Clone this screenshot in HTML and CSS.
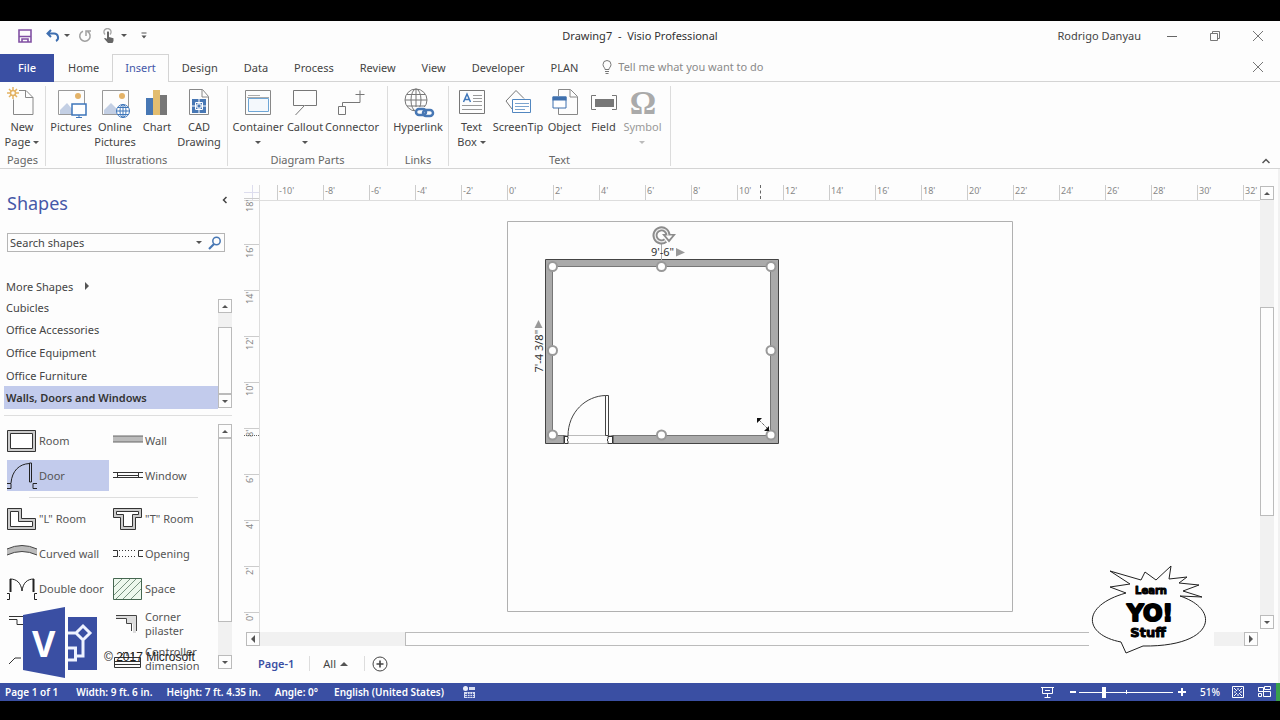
FILE: index.html
```html
<!DOCTYPE html>
<html lang="en">
<head>
<meta charset="utf-8">
<title>Drawing7 - Visio Professional</title>
<link rel="stylesheet" href="styles.css">
</head>
<body>
<div class="app">
  <header class="titlebar">
    <div class="quick">
      <button class="q-save" aria-label="Save"><svg width="14" height="14" viewBox="0 0 14 14" fill="none" stroke="#8150a3" stroke-width="1.6"><path d="M1 1h12v12H1zM1 7.5h12M4 13v-3h6v3"/></svg></button>
      <button class="q-undo" aria-label="Undo"><svg width="14" height="14" viewBox="0 0 14 14" fill="none" stroke="#3f6fb0" stroke-width="2"><path d="M5 1L1.5 4.5 5 8M2 4.5h6a4 4 0 0 1 2 7.500"/></svg><i class="down"></i></button>
      <button class="q-redo" aria-label="Repeat"><svg width="14" height="14" viewBox="0 0 14 14" fill="none" stroke="#a0a0a0" stroke-width="1.500"><path d="M5 2.200a5.200 5.200 0 1 0 4.500.3M8 7V2h5"/></svg></button>
      <button class="q-touch" aria-label="Touch mode"><svg width="12" height="16" viewBox="0 0 12 16"><path d="M2 6.500a3.500 3.500 0 1 1 5 0" fill="none" stroke="#a8a8a8" stroke-width="1.500"/><path d="M4 4q1-1.400 2 0v5l4.500 1.200V13L9.500 15H5L1 10.500q1-1.200 3 .5z" fill="#666"/></svg><i class="down"></i></button>
      <button class="q-more" aria-label="Customize"><svg width="6" height="7" viewBox="0 0 6 7"><path d="M.5.500h5v1h-5zM.5 3.500h5L3 6.500z" fill="#555"/></svg></button>
    </div>
    <h1>Drawing7&nbsp; -&nbsp; Visio Professional</h1>
    <div class="account">
      <span>Rodrigo Danyau</span>
      <button aria-label="Minimize"><svg width="10" height="10"><path d="M0 5.500h10" stroke="#666"/></svg></button>
      <button aria-label="Restore"><svg width="10" height="10" fill="none" stroke="#777"><path d="M.5 2.500h7v7h-7zM2.500 2.500v-2h7v7h-2"/></svg></button>
      <button aria-label="Close"><svg width="10" height="10"><path d="M0 0l10 10M10 0L0 10" stroke="#777"/></svg></button>
    </div>
  </header>

  <nav class="tabs">
    <button class="file">File</button>
    <button>Home</button>
    <button class="active">Insert</button>
    <button>Design</button>
    <button>Data</button>
    <button>Process</button>
    <button>Review</button>
    <button>View</button>
    <button>Developer</button>
    <button>PLAN</button>
    <label class="tell"><svg width="10" height="14" viewBox="0 0 10 14" fill="none" stroke="#777"><path d="M3 9.500C3 7.500 1 7 1 4.500a4 4 0 0 1 8 0C9 7 7 7.500 7 9.500zM3 11.500h4M3.500 13.500h3"/></svg><input type="text" placeholder="Tell me what you want to do"></label>
    <button class="doc-close" aria-label="Close document"><svg width="10" height="10"><path d="M0 0l10 10M10 0L0 10" stroke="#777"/></svg></button>
  </nav>

  <section class="ribbon">
    <div class="group g-pages">
      <div class="items">
        <button><svg width="32" height="32" viewBox="0 0 32 32" fill="none"><path d="M13 4.500h7l7 7v17H7.500v-15M19.500 4.500v7H27" stroke="#888"/><g stroke="#e3b263" stroke-width="1.500"><circle cx="7" cy="7" r="2.500"/><path d="M7 1v3M7 10v3M1 7h3M10 7h3M3 3l2 2M9 9l2 2M11 3L9 5M5 9l-2 2"/></g></svg><span>New<br>Page<i class="down beside"></i></span></button>
      </div>
      <h2>Pages</h2>
    </div>
    <div class="group g-illustrations">
      <div class="items">
        <button><svg width="32" height="32" viewBox="0 0 32 32" fill="none"><path d="M3.500 4.500h26v24h-26z" stroke="#999"/><path d="M5 28v-4l7-7 5 6v5z" fill="#c3cfe4"/><circle cx="23" cy="10" r="3" fill="#e4b368"/><path d="M17 18h14v11H17z" fill="#fff" stroke="#3e76ba" stroke-width="1.500"/><path d="M24 29v3M21 31.500h6" stroke="#3e76ba"/></svg><span>Pictures</span></button>
        <button><svg width="32" height="32" viewBox="0 0 32 32" fill="none"><path d="M3.500 4.500h26v24h-26z" stroke="#999"/><path d="M5 28v-4l7-7 6 6v5z" fill="#c3cfe4"/><circle cx="23" cy="10" r="3" fill="#e4b368"/><circle cx="24" cy="25" r="6.500" fill="#fff" stroke="#3e76ba"/><ellipse cx="24" cy="25" rx="3" ry="6.500" stroke="#3e76ba"/><path d="M17.500 25h13M24 18.500v13M19 21.500h10M19 28.500h10" stroke="#3e76ba"/></svg><span>Online<br>Pictures</span></button>
        <button><svg width="32" height="32" viewBox="0 0 32 32"><path d="M5 12h7v17H5z" fill="#4777b4"/><path d="M12 4h7v25h-7z" fill="#e2bd70"/><path d="M19 9h7v20h-7z" fill="#777"/></svg><span>Chart</span></button>
        <button><svg width="32" height="32" viewBox="0 0 32 32" fill="none"><path d="M6.500 3.500h13l6 7v18h-19zM19 4v7h6" stroke="#888"/><path d="M9 13h14v14H9z" fill="#4777b4"/><path d="M16 13v14M9 20h14" stroke="#fff"/><path d="M12.500 16.500h7v7h-7z" stroke="#fff"/><path d="M14 18h4v4h-4z" fill="#4777b4" stroke="#fff"/></svg><span>CAD<br>Drawing</span></button>
      </div>
      <h2>Illustrations</h2>
    </div>
    <div class="group g-diagram">
      <div class="items">
        <button><svg width="32" height="32" viewBox="0 0 32 32" fill="none"><path d="M3.500 4.500h25v24h-25z" stroke="#888"/><path d="M6 9.500h12M5 11.500h22" stroke="#aaa"/><path d="M6.500 12.500h20v13h-20z" stroke="#6ea6d6" fill="#f4f8fc"/></svg><span>Container<br><i class="down"></i></span></button>
        <button><svg width="32" height="32" viewBox="0 0 32 32" fill="none" stroke="#777"><path d="M16 19.500h11.500v-15h-23v15h11L6.500 29"/></svg><span>Callout<br><i class="down"></i></span></button>
        <button><svg width="32" height="32" viewBox="0 0 32 32" fill="none" stroke="#777"><path d="M2.500 20.500h7v8h-7zM6.500 20v-3.500h17.500v-12M19.500 8.500h9"/></svg><span>Connector</span></button>
      </div>
      <h2>Diagram Parts</h2>
    </div>
    <div class="group g-links">
      <div class="items">
        <button><svg width="32" height="32" viewBox="0 0 32 32" fill="none"><g stroke="#777"><circle cx="14" cy="14" r="11"/><ellipse cx="14" cy="14" rx="5" ry="11"/><path d="M3 14h22M14 3v22M5 8.500h18M5 20h18"/></g><path d="M13 21h20v10H13z" fill="#fdfdfd"/><g stroke="#4777b4" stroke-width="2.500"><rect x="14" y="23" width="10" height="6" rx="3"/><rect x="21" y="24" width="10" height="6" rx="3"/></g></svg><span>Hyperlink</span></button>
      </div>
      <h2>Links</h2>
    </div>
    <div class="group g-text">
      <div class="items">
        <button><svg width="32" height="32" viewBox="0 0 32 32" fill="none"><path d="M3.500 4.500h25v23h-25z" stroke="#777"/><path d="M7.500 16L11 8l3.500 8M9 13.500h4" stroke="#3e76ba" stroke-width="1.500"/><path d="M17 9.500h9M17 12.500h9M17 15.500h9M6 19.500h20M6 23.500h20" stroke="#999"/></svg><span>Text<br>Box<i class="down beside"></i></span></button>
        <button><svg width="32" height="32" viewBox="0 0 32 32" fill="none"><path d="M10 23l-6-8L14 4.500l8 8" stroke="#777"/><path d="M10.500 13.500h18v13h-18z" fill="#fff" stroke="#5287c0"/><path d="M13 17.500h14M13 20.500h14M13 23.500h10" stroke="#7ba4cf"/></svg><span>ScreenTip</span></button>
        <button><svg width="32" height="32" viewBox="0 0 32 32" fill="none"><path d="M9.500 10V3.500h12l7 7v18h-19V22M21 4v7h7" stroke="#888"/><path d="M4 11h13v11H4z" fill="#fff" stroke="#3e70ae"/><path d="M3.500 10.500h14v4h-14z" fill="#3e70ae"/></svg><span>Object</span></button>
        <button><svg width="32" height="32" viewBox="0 0 32 32" fill="none"><path d="M8 9.500H3.500v14H8M24 9.500h4.500v14H24" stroke="#777"/><path d="M7 13h19v8H7z" fill="#777"/></svg><span>Field</span></button>
        <button class="disabled" disabled><svg width="32" height="32" viewBox="0 0 32 32"><text class="omega" x="16" y="28">Ω</text></svg><span>Symbol<br><i class="down"></i></span></button>
      </div>
      <h2>Text</h2>
    </div>
    <button class="collapse" aria-label="Collapse the ribbon"><svg width="8" height="6" fill="none" stroke="#555" stroke-width="1.500"><path d="M.5 5L4 1.500 7.500 5"/></svg></button>
  </section>

  <main class="work">
    <aside class="shapes">
      <div class="shapes-head"><h2>Shapes</h2><button aria-label="Minimize the Shapes window"><svg width="5" height="8" fill="none" stroke="#444" stroke-width="1.500"><path d="M4.500 1L1.500 4l3 3"/></svg></button></div>
      <div class="search">
        <input type="text" aria-label="Search shapes" value="Search shapes">
        <i class="down"></i>
        <button aria-label="Search"><svg width="14" height="14" viewBox="0 0 14 14" fill="none" stroke="#4777b4" stroke-width="1.500"><circle cx="8.500" cy="5" r="3.700"/><path d="M6 8l-5 5" stroke-width="2.200"/></svg></button>
      </div>
      <button class="more">More Shapes<i class="right"></i></button>
      <div class="stencils">
        <ul>
          <li><button>Cubicles</button></li>
          <li><button>Office Accessories</button></li>
          <li><button>Office Equipment</button></li>
          <li><button>Office Furniture</button></li>
          <li><button class="current">Walls, Doors and Windows</button></li>
        </ul>
        <div class="vbar"><button aria-label="Up"><i class="up"></i></button><div class="gap"></div><div class="thumb"></div><button aria-label="Down"><i class="down"></i></button></div>
      </div>
      <div class="masters">
        <div class="palette">
          <div class="grid">
            <button><svg width="30" height="30" viewBox="0 0 30 30" fill="none" stroke="#333"><path d="M.5 4.500h28v21H.5z" fill="#ccc"/><path d="M3.500 7.500h22v15h-22z" fill="#fff"/></svg>Room</button>
            <button><svg width="30" height="30" viewBox="0 0 30 30"><path d="M0 10h30v6H0z" fill="#bbb"/><path d="M0 10h30M0 16h30" stroke="#666"/></svg>Wall</button>
            <button class="picked"><svg width="30" height="30" viewBox="0 0 30 30" fill="none" stroke="#222"><path d="M4 22C5 10 12 3 22.500 2.500M22.500 2h2v19h-2zM0 22.500h4v5H0M30 22.500h-4v5h4"/></svg>Door</button>
            <button><svg width="30" height="30" viewBox="0 0 30 30" fill="none" stroke="#333"><path d="M0 11.500h30M0 16.500h30M4.500 11v6M25.500 11v6M5 14.500h20"/></svg>Window</button>
          </div>
          <hr>
          <div class="grid">
            <button><svg width="30" height="30" viewBox="0 0 30 30" fill="none" stroke="#333"><path d="M.5 4.500h14v10h14v11H.5z" fill="#ccc"/><path d="M3.500 7.500h8v10h14v5h-22z" fill="#fff"/></svg>"L" Room</button>
            <button><svg width="30" height="30" viewBox="0 0 30 30" fill="none" stroke="#333"><path d="M.5 4.500h28v9h-6v12h-15v-12h-7z" fill="#ccc"/><path d="M3.500 7.500h22v3h-6v12h-9v-12h-7z" fill="#fff"/></svg>"T" Room</button>
            <button><svg width="30" height="30" viewBox="0 0 30 30"><path d="M0 10q15-7 30 0v6q-15-7-30 0z" fill="#bbb"/><path d="M0 10q15-7 30 0M0 16q15-7 30 0" fill="none" stroke="#444"/></svg>Curved wall</button>
            <button><svg width="30" height="30" viewBox="0 0 30 30" fill="none" stroke="#333"><path d="M0 11.500h4.500v6H0M30 11.500h-4.500v6H30"/><path d="M6 11.500h18M6 17.500h18" stroke-dasharray="1 2"/></svg>Opening</button>
            <button><svg width="30" height="30" viewBox="0 0 30 30" fill="none" stroke="#222"><path d="M3.500 18V5M26.500 18V5" stroke-width="2"/><path d="M3 5c7 0 11 4 12 12C16 9 20 5 27 5M0 19.500h2.500v6H0M30 19.500h-2.500v6H30"/></svg>Double door</button>
            <button><svg width="30" height="30" viewBox="0 0 30 30" fill="#edf8ed" stroke="#456650"><path d="M.5 4.500h28v21H.5z"/><path d="M1 13l8-8M1 21L17 5M3 25L23 5M10 25L28 7M18 25l10-10" stroke-width=".7"/></svg>Space</button>
            <button aria-label="Pilaster"><svg width="30" height="30" viewBox="0 0 30 30" fill="none" stroke="#333"><path d="M2 7.500h26M2 10.500h8v5h18"/></svg></button>
            <button><svg width="30" height="30" viewBox="0 0 30 30" fill="none"><path d="M3 6h20v18h-3v-9h-6v-6H3z" fill="#ddd"/><path d="M3 6.500h20.500V22M3 9.500h10.500v5h5V22" stroke="#444"/></svg>Corner<br>pilaster</button>
            <button aria-label="Callout"><svg width="30" height="30" viewBox="0 0 30 30" fill="none" stroke="#333"><path d="M2 20l6-6h6"/></svg></button>
            <button><svg width="30" height="30" viewBox="0 0 30 30" fill="none" stroke="#333"><path d="M1.500 13.500h26v10h-26zM2 17.500h25M2 20.500h25M8 12l3-4M14 12V8M20 12V8"/></svg>Controller<br>dimension</button>
          </div>
        </div>
        <div class="vbar tall"><button aria-label="Up"><i class="up"></i></button><div class="thumb"></div><div class="gap"></div><button aria-label="Down"><i class="down"></i></button></div>
      </div>
    </aside>

    <section class="drawing">
      <div class="corner"></div>
      <div class="hruler"><span>-10'</span><span>-8'</span><span>-6'</span><span>-4'</span><span>-2'</span><span>0'</span><span>2'</span><span>4'</span><span>6'</span><span>8'</span><span>10'</span><span>12'</span><span>14'</span><span>16'</span><span>18'</span><span>20'</span><span>22'</span><span>24'</span><span>26'</span><span>28'</span><span>30'</span><span>32'</span><i class="hmark"></i></div>
      <div class="vbar page-bar"><button aria-label="Up"><i class="up"></i></button><div class="gap"></div><div class="thumb"></div><div class="gap"></div><button aria-label="Down"><i class="down"></i></button></div>
      <div class="vruler"><span>18'</span><span>16'</span><span>14'</span><span>12'</span><span>10'</span><span>8'</span><span>6'</span><span>4'</span><span>2'</span><span>0'</span><i class="vmark"></i></div>
      <div class="canvas">
        <svg width="1000" height="430" viewBox="260 201 1000 430" fill="none">
          <path d="M507.500 221.500h505v390h-505z" fill="#fdfdfd" stroke="#b0b0b0"/>
          <path d="M545.500 259.500h233v184h-233z" fill="#aaa"/>
          <path d="M553 267h218v169H553z" fill="#fdfdfd"/>
          <path d="M564 436h48v9h-48z" fill="#fdfdfd"/>
          <path d="M564.500 443.500h-19v-184h233v184h-166" stroke="#444"/>
          <path d="M564.500 435.500H552.500v-169h218v169H612.500" stroke="#777"/>
          <path d="M564 435.500h48M568 443.500h42" stroke="#bbb"/>
          <path d="M564.500 435.500v8M612.500 435.500v8" stroke="#333" stroke-width="2"/>
          <path d="M565 436.500h3v2q-1.500 1.500 0 3v2h-3M612 436.500h-4v2q-1.500 1.500 0 3v2h4" fill="#fff" stroke="#333"/>
          <path d="M568 436C568 412 586 396 605.500 395.500M605.500 395.500h3v40h-3z" stroke="#444"/>
          <path d="M661.500 243v19" stroke="#aaa"/>
          <g class="handles"><circle cx="552.500" cy="266.500" r="4.500"/><circle cx="661.500" cy="266.500" r="4.500"/><circle cx="771" cy="266.500" r="4.500"/><circle cx="552.500" cy="350.500" r="4.500"/><circle cx="771" cy="350.500" r="4.500"/><circle cx="552.500" cy="435" r="4.500"/><circle cx="661.500" cy="435" r="4.500"/><circle cx="771" cy="435" r="4.500"/></g>
          <path d="M665.500 240.500a6.500 6.500 0 1 1 2.500-5" stroke="#8c8c8c" stroke-width="5"/>
          <path d="M662 234h14l-7 8.500z" fill="#8c8c8c"/>
          <path d="M665.500 240.500a6.500 6.500 0 1 1 2.500-5" stroke="#eee" stroke-width="1.300"/>
          <path d="M665.500 235.500h7l-3.500 4z" fill="#fff"/>
          <text class="dim" x="651" y="256">9'-6"</text>
          <path d="M676 248l9 4.500-9 4z" fill="#999"/>
          <text class="dim" transform="translate(542.500 372.500) rotate(-90)">7'-4 3/8"</text>
          <path d="M534.500 328l4-8 4 8z" fill="#999"/>
          <path d="M759 420l8 8" stroke="#222" stroke-dasharray="1 1"/>
          <path d="M757 418h5l-5 5zM769 431h-5l5-5z" fill="#111"/>
        </svg>
      </div>
      <div class="hbar"><button aria-label="Left"><i class="left"></i></button><div class="gap"></div><div class="thumb"></div><div class="gap end"></div><button aria-label="Right"><i class="right"></i></button></div>
      <div class="pages"><button class="current">Page-1</button><button class="all">All<i class="up"></i></button><button class="add" aria-label="Insert page"><svg width="16" height="16" fill="none" stroke="#444"><circle cx="8" cy="8" r="7"/><path d="M8 4.500v7M4.500 8h7" stroke-width="1.600"/></svg></button></div>
    </section>

    <div class="edge"></div>

    <div class="visio-mark">
      <svg width="78" height="74" viewBox="0 0 78 74" fill="none"><path d="M1 10L43 2v71L1 65z" fill="#3a4fa3"/><path d="M46 12h29v53H46z" fill="#3a4fa3"/><path d="M46 28h8M61 35v16h-7M46 43h7.500v12H46M54 28l7-7 7 7-7 7z" stroke="#eef2ff" stroke-width="3"/><text class="vee" x="10" y="52">V</text></svg>
      <span>© 2017 Microsoft</span>
    </div>
    <div class="yo-mark">
      <svg width="125" height="92" viewBox="9 4 125 92"><path d="M46 33L30 27l20-3L30 11l31 9 4-8 11 8L91 6l-2 13 18-2-8 6 20 2-16 6 19 6-22-1C142 50 134 87 63 86L46 93l-5-11C4 75 0 46 46 33z" fill="#fdfdfd" stroke="#222"/><text class="learn" x="71" y="34">Learn</text><text class="yo" x="70" y="61">YO!</text><text class="stuff" x="68" y="77">Stuff</text></svg>
    </div>
  </main>

  <footer class="status">
    <span class="s-page">Page 1 of 1</span><span class="s-width">Width: 9 ft. 6 in.</span><span class="s-height">Height: 7 ft. 4.35 in.</span><span class="s-angle">Angle: 0°</span><span class="s-lang">English (United States)</span>
    <button aria-label="Macro"><svg width="12" height="12" viewBox="0 0 12 12"><circle cx="2.500" cy="2.500" r="2.500" fill="#e9edf9"/><path d="M6 1h6v3H6zM1 6h11v6H1z" fill="#d8def2"/><path d="M2 8.500h9M2 10.500h9M4.500 6.500v5M7 6.500v5M9.500 6.500v5" stroke="#3a4fa3" stroke-width=".8"/></svg></button>
    <div class="zoom">
      <button aria-label="Presentation mode"><svg width="13" height="12" fill="none" stroke="#fff"><path d="M0 1.500h13M1.500 2v5.500h10V2M6.500 8v3M3.500 11.500h6M4 4.500h5"/></svg></button>
      <button aria-label="Zoom out" class="sign"><svg width="6" height="8"><path d="M0 4h6" stroke="#fff" stroke-width="2"/></svg></button>
      <input type="range" aria-label="Zoom" min="0" max="100" value="25">
      <button aria-label="Zoom in" class="sign"><svg width="8" height="8"><path d="M0 4h8M4 0v8" stroke="#fff" stroke-width="2"/></svg></button>
      <span>51%</span>
      <button aria-label="Fit page"><svg width="12" height="12" fill="none" stroke="#fff"><path d="M.5.500h11v11H.5zM2 2l3 3M10 2L7 5M2 10l3-3M10 10L7 7M6 2v2M6 8v2M2 6h2M8 6h2"/></svg></button>
      <button aria-label="Switch windows" class="switch"><svg width="14" height="12" fill="none" stroke="#fff"><path d="M.5 1.500h5v4h-5zM6.500.500h6v3h-6zM5.500 5.500h7v5h-7zM.5 7.500h3v3h-3z"/></svg></button>
      <i class="green"></i>
    </div>
  </footer>
</div>
</body>
</html>
```
FILE: styles.css
```css
* { box-sizing: border-box; }
body { margin: 0; background: #000; color: #444; font: 11px/15px "Noto Sans", "Open Sans", sans-serif; }
button, input { margin: 0; padding: 0; border: 0; border-radius: 0; background: none; color: inherit; font: inherit; line-height: inherit; outline: 0; }
button { display: inline-flex; align-items: center; justify-content: center; white-space: nowrap; }
h1, h2, ul { margin: 0; padding: 0; font-size: 11px; font-weight: 400; list-style: none; }
svg { display: block; flex: none; }
.app { display: flex; flex-direction: column; height: 100vh; padding: 21px 0 19px; overflow: hidden; }
.app > * { background: #fdfdfd; }

.down, .up, .left, .right { display: inline-block; flex: none; width: 0; height: 0; border: 3px solid transparent; }
.down { border-top-color: #555; border-bottom: 0; }
.up { border-bottom-color: #555; border-top: 0; }
.left { border-width: 4px; border-right-color: #555; border-left: 0; }
.right { border-width: 4px; border-left-color: #555; border-right: 0; }

.titlebar { display: grid; grid-template-columns: 1fr auto 1fr; align-items: center; height: 33px; flex: none; padding-bottom: 4px; }
.titlebar h1 { color: #333; }
.quick { display: flex; align-items: center; padding-left: 18px; }
.quick .down { margin-left: 4px; }
.q-undo { margin-left: 14px; }
.q-redo { margin-left: 8px; }
.q-touch { margin-left: 11px; }
.q-touch .down { margin-left: 6px; }
.q-more { margin-left: 14px; }
.account { display: flex; align-items: center; justify-content: flex-end; padding-right: 17px; }
.account button { margin-left: 33px; }
.account span + button { margin-left: 26px; }

.tabs { display: flex; height: 28px; flex: none; border-bottom: 1px solid #d4d4d4; }
.tabs > button { height: 28px; padding: 0 12px 3px; border: 1px solid transparent; border-bottom: 0; }
.tabs .file { width: 54px; margin-right: 1px; background: #3a4fa3; color: #fff; font-weight: 500; }
.tabs .active { background: #fdfdfd; border-color: #d4d4d4; color: #4558a8; }
.tell { display: flex; flex: 1; align-items: center; gap: 6px; padding: 0 0 2px 11px; }
.tell input { flex: 1; }
.tell input::placeholder { color: #8a8a8a; opacity: 1; }
.tabs .doc-close { padding-right: 16px; }

.ribbon { display: flex; height: 87px; flex: none; padding: 4px 0 2px; border-bottom: 1px solid #d4d4d4; }
.group { display: flex; flex-direction: column; justify-content: space-between; border-right: 1px solid #dcdcdc; }
.group h2 { text-align: center; line-height: 12px; color: #666; }
.items { display: flex; align-items: flex-start; }
.items button { flex: none; flex-direction: column; justify-content: flex-start; text-align: center; }
.items svg { margin-bottom: 1px; overflow: visible; }
.items .down { vertical-align: 2px; }
.items .beside { margin-left: 3px; }
.g-pages { width: 46px; }
.g-pages button { width: 44px; }
.g-illustrations { width: 182px; }
.g-illustrations .items { padding-left: 2px; }
.g-illustrations button { width: 42px; }
.g-illustrations button:first-child { width: 46px; }
.g-diagram { width: 160px; }
.g-diagram .items { padding-left: 4px; }
.g-diagram button { width: 52px; }
.g-diagram button:nth-child(2) { width: 42px; }
.g-links { width: 61px; }
.g-links .items { justify-content: center; }
.g-text { width: 222px; }
.g-text .items { padding-left: 2px; }
.g-text button { width: 41px; }
.g-text button:nth-child(2) { width: 52px; }
.g-text button:nth-child(4) { width: 37px; }
.ribbon .disabled { color: #999; }
.disabled .down { border-top-color: #bbb; }
.omega { fill: #aaa; font: 700 33px "Liberation Serif", serif; text-anchor: middle; }
.collapse { align-self: flex-end; margin-left: auto; padding: 0 10px 2px 0; }

.work { position: relative; display: flex; flex: 1; min-height: 0; }
.shapes { display: flex; flex-direction: column; flex: none; width: 244px; padding: 20px 12px 0 4px; }
.shapes-head { display: flex; align-items: center; justify-content: space-between; height: 28px; padding: 0 5px 0 3px; }
.shapes-head h2 { color: #4558a8; font-size: 18px; line-height: 28px; }
.shapes-head button { padding-bottom: 6px; }
.search { display: flex; align-items: center; height: 19px; margin: 16px 7px 0 3px; padding: 0 2px; border: 1px solid #b5b5b5; }
.search input { flex: 1; min-width: 0; }
.search button { margin-left: 6px; }
.more { align-self: flex-start; gap: 12px; height: 20px; margin: 24px 0 0 2px; }
.stencils { display: flex; justify-content: space-between; height: 120px; padding-bottom: 6px; border-bottom: 1px solid #dedede; }
.stencils ul { flex: 1; display: grid; grid-template-rows: repeat(5, 1fr); }
.stencils li { display: flex; }
.stencils li button { flex: 1; justify-content: flex-start; padding-left: 2px; }
.stencils .current { background: #c2cbec; color: #333; font-weight: 600; }
.vbar { display: flex; flex-direction: column; width: 14px; flex: none; margin: 3px 0 1px; background: #f1f1f1; }
.vbar button, .hbar button { flex: none; width: 14px; height: 14px; border: 1px solid #bbb; background: #fdfdfd; }
.thumb { flex: 1; border: 1px solid #bbb; background: #fdfdfd; }
.stencils .gap { height: 14px; }
.masters { display: flex; flex: 1; min-height: 0; justify-content: space-between; padding: 7px 0 4px 3px; overflow: hidden; }
.palette { flex: 1; min-height: 0; margin-bottom: -4px; overflow: hidden; }
.grid { display: grid; grid-template-columns: 102px 102px; column-gap: 4px; grid-auto-rows: 35px; align-items: center; }
.grid button { justify-content: flex-start; gap: 2px; height: 31px; line-height: 14px; text-align: left; color: #555; }
.grid .picked { background: #c2cbec; }
.palette hr { height: 1px; margin: 4px 20px 3px 22px; border: 0; background: #dedede; }
.masters .vbar { margin: 1px 0 10px; }
.masters .thumb { flex: 183; }
.masters .gap { flex: 33; }

.drawing { display: grid; grid-template-columns: 16px minmax(0, 1fr) 18px; grid-template-rows: 16px minmax(0, 1fr) 14px 37px; flex: 1; min-width: 0; padding-top: 16px; }
.corner { border-right: 1px solid #ddd; border-bottom: 1px solid #ddd; background: linear-gradient(#dde, #dde) 8px 0 / 1px 100% no-repeat, linear-gradient(#dde, #dde) 0 7px / 100% 1px no-repeat; }
.hruler, .vruler { position: relative; display: flex; overflow: hidden; color: #888; font-size: 9px; line-height: 12px; }
.hruler { padding-left: 17px; border-bottom: 1px solid #ddd; }
.hruler span { flex: none; width: 46px; padding-left: 1px; border-left: 1px solid #ccc; }
.vruler { flex-direction: column; border-right: 1px solid #ddd; margin-top: -3px; }
.vruler span { flex: none; height: 46px; padding-bottom: 1px; border-bottom: 1px solid #ccc; writing-mode: vertical-rl; transform: rotate(180deg); text-align: end; }
.hmark { position: absolute; left: 500px; top: 0; height: 14px; border-left: 1px dashed #666; }
.vmark { position: absolute; left: 0; top: 237px; width: 15px; border-top: 1px dotted #666; }
.page-bar { grid-row: 1 / 3; grid-column: 3; margin: 1px 0 3px; }
.page-bar .gap:nth-child(2) { flex: 108; }
.page-bar .thumb { flex: 208; }
.page-bar .gap:nth-child(4) { flex: 99; }
.vruler, .canvas { grid-row: 2; }
.canvas { overflow: hidden; }
.handles circle { fill: #fff; stroke: #999; stroke-width: 2px; }
.dim { fill: #333; font-size: 11px; }
.hbar { grid-column: 1 / 4; display: flex; margin: 0 20px 0 2px; background: #f1f1f1; }
.hbar .gap { flex: 145; }
.hbar .thumb { flex: 785; }
.hbar .end { flex: 53; }
.pages { grid-column: 1 / 4; display: flex; align-items: center; padding: 0 0 2px 14px; }
.pages .current { color: #3a4fa3; font-weight: 600; }
.pages .all { gap: 4px; margin: 0 14px 0 15px; padding: 0 16px 0 13px; border: solid #ddd; border-width: 0 1px; }
.pages .all .up { border-width: 0 4px 4px; }
.pages .add { margin-left: -7px; }
.edge { flex: none; width: 2px; background: #f1f1f1; }

.visio-mark { position: absolute; left: 22px; bottom: 0; display: flex; color: #222; font: 12px/16px "Liberation Sans", sans-serif; }
.visio-mark svg { margin-bottom: 4px; }
.visio-mark span { margin: 44px 0 0 4px; }
.vee { fill: #fff; font: 700 36px "Noto Sans", sans-serif; }
.yo-mark { position: absolute; right: 66px; bottom: 27px; background: #fdfdfd; }
.yo-mark text { fill: #000; stroke: #000; stroke-linejoin: round; font-family: "DejaVu Sans", sans-serif; font-weight: 700; text-anchor: middle; }
.yo-mark .learn { font-size: 10px; stroke-width: 1px; }
.yo-mark .yo { font-size: 23px; stroke-width: 2px; }
.yo-mark .stuff { font-size: 13px; stroke-width: 1px; }

.status { display: flex; align-items: center; flex: none; height: 18px; padding-left: 5px; color: #fff; font-size: 10px; font-weight: 600; white-space: nowrap; }
.app > .status { background: #3a4fa3; }
.s-page { margin-right: 18px; }
.s-width, .s-height { margin-right: 14px; }
.s-angle { margin-right: 16px; }
.s-lang { margin-right: 19px; }
.zoom { display: flex; align-items: center; align-self: stretch; margin-left: auto; }
.zoom button + .sign { margin-left: 16px; }
.zoom input { width: 94px; height: 12px; margin: 0 5px 0 3px; -webkit-appearance: none; appearance: none; background: linear-gradient(#fff, #fff) 47px 4px / 1px 4px no-repeat, linear-gradient(#fff, #fff) 0 6px / 100% 1px no-repeat; }
.zoom input::-webkit-slider-thumb { -webkit-appearance: none; width: 4px; height: 11px; background: #fff; }
.zoom span { margin: 0 12px 0 14px; font-weight: 500; }
.zoom .switch { margin: 0 4px 0 14px; }
.green { align-self: stretch; width: 4px; background: #39a04a; }
```
